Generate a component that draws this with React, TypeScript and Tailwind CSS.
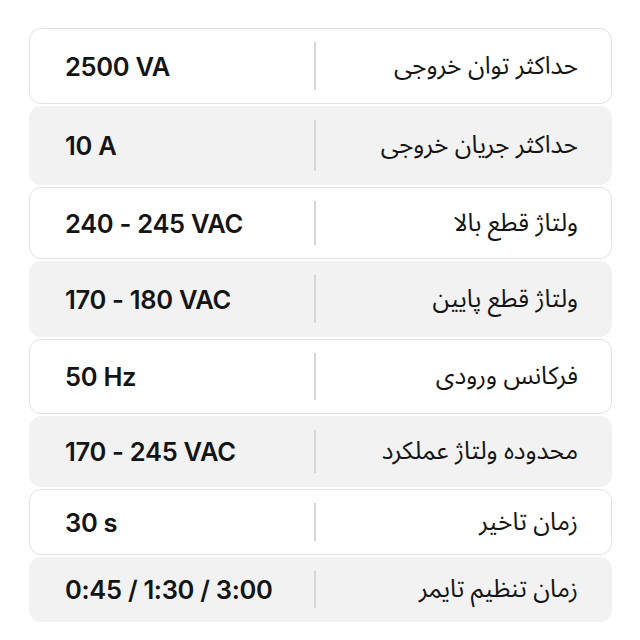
import React from "react";

type Spec = { label: string; value: string; h: string; shaded: boolean };

const specs: Spec[] = [
  { label: "حداکثر توان خروجی", value: "2500 VA", h: "h-[76px]", shaded: false },
  { label: "حداکثر جریان خروجی", value: "10 A", h: "h-[79px]", shaded: true },
  { label: "ولتاژ قطع بالا", value: "240 - 245 VAC", h: "h-[72px]", shaded: false },
  { label: "ولتاژ قطع پایین", value: "170 - 180 VAC", h: "h-[76px]", shaded: true },
  { label: "فرکانس ورودی", value: "50 Hz", h: "h-[75px]", shaded: false },
  { label: "محدوده ولتاژ عملکرد", value: "170 - 245 VAC", h: "h-[71px]", shaded: true },
  { label: "زمان تاخیر", value: "30 s", h: "h-[66px]", shaded: false },
  { label: "زمان تنظیم تایمر", value: "0:45 / 1:30 / 3:00", h: "h-[65px]", shaded: true },
];

export default function App() {
  return (
    <div className="min-h-screen bg-white pt-[28px] pl-[29px] w-[640px]">
      <div className="flex flex-col gap-[2px] w-[583px]">
        {specs.map((s) => (
          <div
            key={s.label}
            className={`flex items-stretch rounded-xl border ${s.h} ${
              s.shaded ? "bg-[#f2f2f2] border-[#f2f2f2]" : "bg-white border-[#e3e3e3]"
            }`}
          >
            {/* مقدار */}
            <div className="w-[284px] flex items-center pl-[35px] pt-[2px]">
              <span className="font-['Inter',sans-serif] font-semibold text-[25.5px] tracking-[-0.3px] text-[#141414]">
                {s.value}
              </span>
            </div>
            <div className="w-[1.5px] my-[13px] bg-[#d6d6d6]" />
            {/* عنوان */}
            <div className="flex-1 flex items-center justify-end pr-[33px]">
              <span
                dir="rtl"
                className="font-['Noto_Sans_Arabic','DejaVu_Sans',sans-serif] text-[24.5px] text-[#141414]"
              >
                {s.label}
              </span>
            </div>
          </div>
        ))}
      </div>
    </div>
  );
}
